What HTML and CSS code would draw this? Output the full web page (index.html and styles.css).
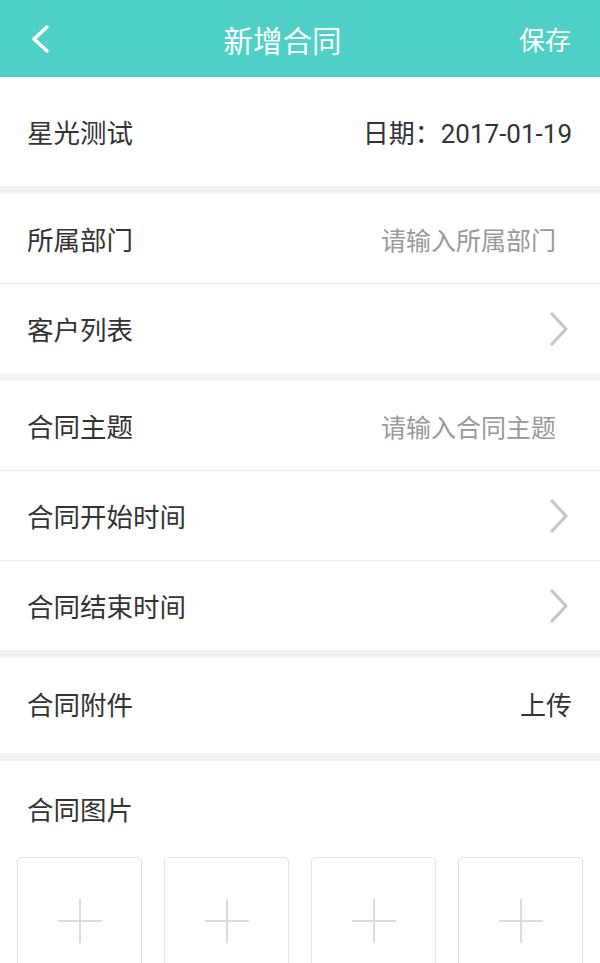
FILE: index.html
```html
<!DOCTYPE html>
<html lang="zh-CN">
<head>
    <meta charset="UTF-8">
    <meta name="viewport" content="width=device-width, initial-scale=1.0">
    <title>新增合同</title>
    <link rel="stylesheet" href="styles.css">
</head>
<body>
    <div class="top-bar">
        <span class="back">
            <svg width="24" height="30" viewBox="0 0 24 30"><polyline points="19,3 6,15 19,27" fill="none" stroke="#fff" stroke-width="3.5" stroke-linecap="round" stroke-linejoin="round"/></svg>
        </span>
        <h1>新增合同</h1>
        <span class="save">保存</span>
    </div>

    <div class="group">
        <div class="row row-tall">
            <span class="label">星光测试</span>
            <span class="value">日期：<span class="num">2017-01-19</span></span>
        </div>
    </div>

    <div class="group">
        <div class="row">
            <span class="label">所属部门</span>
            <input class="field" type="text" placeholder="请输入所属部门">
        </div>
        <div class="row">
            <span class="label">客户列表</span>
            <span class="arrow"><svg width="22" height="36" viewBox="0 0 22 36"><polyline points="4,3 18,18 4,33" fill="none" stroke="#c6c6c6" stroke-width="3.2" stroke-linecap="round" stroke-linejoin="round"/></svg></span>
        </div>
    </div>

    <div class="group">
        <div class="row">
            <span class="label">合同主题</span>
            <input class="field" type="text" placeholder="请输入合同主题">
        </div>
        <div class="row">
            <span class="label">合同开始时间</span>
            <span class="arrow"><svg width="22" height="36" viewBox="0 0 22 36"><polyline points="4,3 18,18 4,33" fill="none" stroke="#c6c6c6" stroke-width="3.2" stroke-linecap="round" stroke-linejoin="round"/></svg></span>
        </div>
        <div class="row">
            <span class="label">合同结束时间</span>
            <span class="arrow"><svg width="22" height="36" viewBox="0 0 22 36"><polyline points="4,3 18,18 4,33" fill="none" stroke="#c6c6c6" stroke-width="3.2" stroke-linecap="round" stroke-linejoin="round"/></svg></span>
        </div>
    </div>

    <div class="group">
        <div class="row row-file">
            <span class="label">合同附件</span>
            <span class="value">上传</span>
        </div>
    </div>

    <div class="group pics">
        <div class="pics-title">合同图片</div>
        <div class="pic-list">
            <div class="pic-add"></div>
            <div class="pic-add"></div>
            <div class="pic-add"></div>
            <div class="pic-add"></div>
        </div>
    </div>
</body>
</html>
```

FILE: styles.css
```css
body { margin: 0; background: #f3f3f3; font-family: "Noto Sans CJK SC", "Noto Sans", sans-serif; color: #333; }
.top-bar { height: 77px; background: #4fd1c7; display: flex; align-items: center; justify-content: space-between; padding: 0 29px 0 28px; color: #fff; }
.top-bar h1 { margin: 0; font-size: 29.5px; font-weight: normal; }
.back { width: 60px; display: flex; align-items: center; }
.save { width: 94px; text-align: right; font-size: 26px; }
.group { background: #fff; margin-bottom: 8px; }
.row { height: 89px; display: flex; align-items: center; justify-content: space-between; padding: 0 28px 0 27px; border-bottom: 1px solid #ececec; font-size: 26.5px; }
.row:last-child { border-bottom: none; }
.row-tall { height: 109px; }
.row-file { height: 95px; padding-bottom: 4px; box-sizing: border-box; }
.value { color: #333; font-size: 26px; }
.num { font-family: Roboto, "Noto Sans", sans-serif; }
.field { border: none; outline: none; text-align: right; font-family: inherit; font-size: 25px; width: 260px; padding: 0 16px 0 0; color: #333; }
.field::placeholder { color: #999; }
.arrow { display: flex; align-items: center; margin-right: 2px; }
.pics { padding: 28px 17px 0 17px; }
.pics-title { font-size: 26.5px; padding-left: 10px; height: 68px; }
.pic-list { display: flex; gap: 22px; }
.pic-add { width: 124px; height: 124px; border: 1px solid #e2e2e2; border-radius: 5px; position: relative; }
.pic-add::before, .pic-add::after { content: ""; position: absolute; background: #dcdcdc; left: 50%; top: 63px; }
.pic-add::before { width: 44px; height: 2px; margin-left: -22px; margin-top: -1px; }
.pic-add::after { width: 2px; height: 44px; margin-left: -1px; margin-top: -22px; }
```
